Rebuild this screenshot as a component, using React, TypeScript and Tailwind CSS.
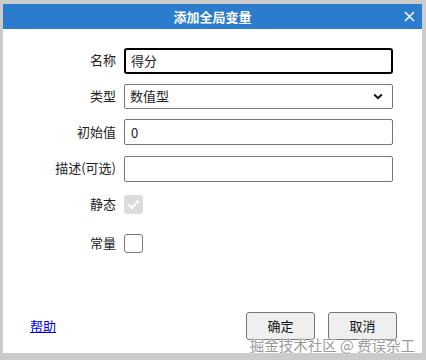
import { useState } from 'react';

const font = "font-['Noto_Sans_CJK_SC','Microsoft_YaHei',sans-serif]";

function Row({ label, children }: { label: string; children: React.ReactNode }) {
  return (
    <div className="flex items-center">
      <div className="w-[113px] text-right text-[13px] leading-[16px] text-[#222]">{label}</div>
      <div className="ml-[8px] w-[269px]">{children}</div>
    </div>
  );
}

export default function App() {
  const [name, setName] = useState('得分');
  const [init, setInit] = useState('0');
  const [desc, setDesc] = useState('');
  const [isConst, setIsConst] = useState(false);

  return (
    <div className={`w-[426px] h-[360px] bg-[#cbcbcb] pt-[4px] pl-[3px] pr-[4px] pb-[7px] ${font}`}>
      <div className="relative flex h-full flex-col bg-white">
        <div className="relative flex h-[25px] items-center justify-center bg-[#2b7ccd]">
          <span className="text-[13px] font-bold leading-none text-white">添加全局变量</span>
          <svg className="absolute right-[7px] top-[7px]" width="11" height="11" viewBox="0 0 11 11">
            <path d="M1 1L10 10M10 1L1 10" stroke="#fff" strokeWidth="1.5" />
          </svg>
        </div>

        <div className="mt-[18px] flex flex-col gap-[10px]">
          <Row label="名称">
            <input
              value={name}
              onChange={e => setName(e.target.value)}
              className="h-[26px] w-full rounded-[3px] border-2 border-black px-[5px] text-[13px] text-[#222] outline-none"
            />
          </Row>
          <Row label="类型">
            <div className="flex h-[25px] w-full items-center justify-between rounded-[2px] border border-[#767676] pl-[5px] pr-[9px] text-[13px] text-[#222]">
              <span>数值型</span>
              <svg width="10" height="7" viewBox="0 0 10 7">
                <path d="M1.2 1.5L5 5.2L8.8 1.5" stroke="#111" strokeWidth="2" fill="none" />
              </svg>
            </div>
          </Row>
          <Row label="初始值">
            <input
              value={init}
              onChange={e => setInit(e.target.value)}
              className="h-[26px] w-full rounded-[2px] border border-[#767676] px-[6px] text-[13px] text-[#222] outline-none"
            />
          </Row>
          <Row label="描述(可选)">
            <input
              value={desc}
              onChange={e => setDesc(e.target.value)}
              className="h-[26px] w-full rounded-[2px] border border-[#767676] px-[6px] text-[13px] text-[#222] outline-none"
            />
          </Row>
        </div>

        <div className="mt-[13px] flex flex-col gap-[20px]">
          <Row label="静态">
            <div className="flex h-[19px] w-[19px] items-center justify-center rounded-[3px] bg-[#dcdcdc]">
              <svg width="13" height="11" viewBox="0 0 13 11">
                <path d="M1.5 5.5L5 9L11.5 1.5" stroke="#fff" strokeWidth="2" fill="none" />
              </svg>
            </div>
          </Row>
          <Row label="常量">
            <button
              onClick={() => setIsConst(!isConst)}
              className="flex h-[19px] w-[19px] items-center justify-center rounded-[3px] border border-[#767676] bg-white"
            >
              {isConst && (
                <svg width="13" height="11" viewBox="0 0 13 11">
                  <path d="M1.5 5.5L5 9L11.5 1.5" stroke="#222" strokeWidth="2" fill="none" />
                </svg>
              )}
            </button>
          </Row>
        </div>

        <div className="mt-auto mb-[13px] flex items-center pl-[27px] pr-[25px]">
          <a href="#" className="text-[13px] text-[#0000ee] underline">帮助</a>
          <div className="ml-auto flex gap-[13px]">
            <button className="h-[28px] w-[69px] rounded-[3px] border border-[#767676] bg-[#efefef] text-[13px] text-[#111]">确定</button>
            <button className="h-[28px] w-[69px] rounded-[3px] border border-[#767676] bg-[#efefef] text-[13px] text-[#111]">取消</button>
          </div>
        </div>

        <div className="pointer-events-none absolute bottom-[-1px] right-[7px] text-[14.5px] leading-[18px] text-[#9a9a9a] [text-shadow:0_0_2px_#fff,0_0_1px_#fff]">
          掘金技术社区 @ 费误杂工
        </div>
      </div>
    </div>
  );
}
